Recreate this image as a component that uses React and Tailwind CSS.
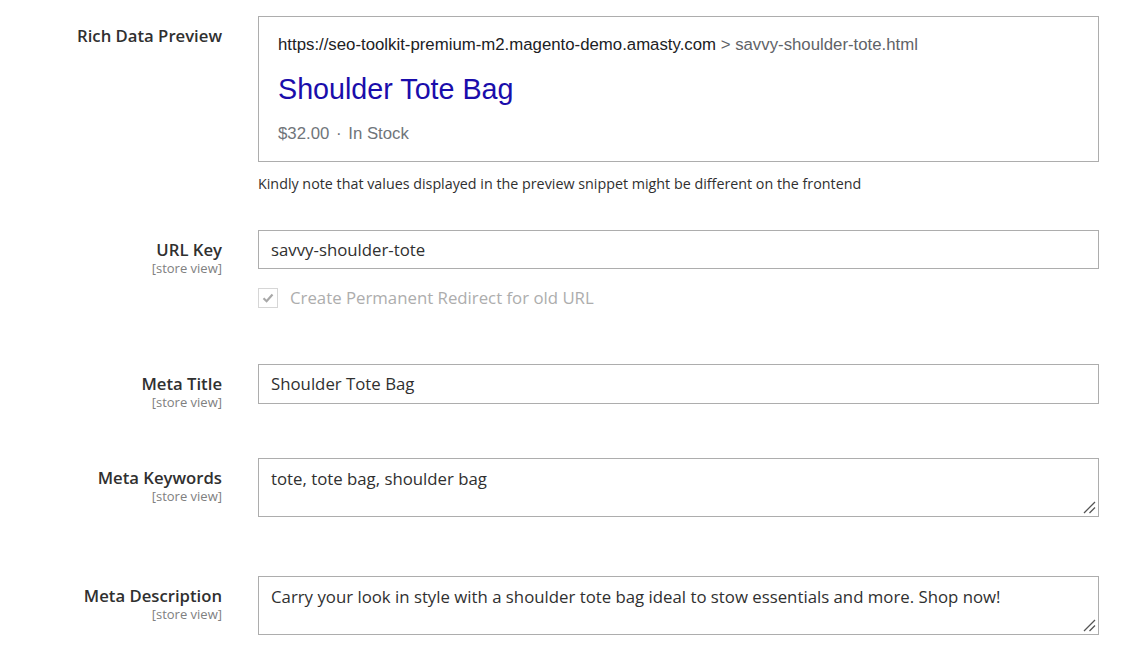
import React from "react";

const os = { fontFamily: '"Open Sans", "Liberation Sans", sans-serif' };

function Label({ title, scope }) {
  return (
    <div className="w-[222px] shrink-0 text-right pt-[9px]">
      <div className="text-[16.7px] leading-[22px] font-semibold text-[#303030]">{title}</div>
      {scope && <div className="text-[13px] leading-[14px] text-[#808080]">[store view]</div>}
    </div>
  );
}

function Grip() {
  return (
    <svg className="absolute right-[3px] bottom-[3px]" width="14" height="14" viewBox="0 0 14 14">
      <path d="M2 13 L13 2 M7.5 13 L13 7.5" stroke="#555" strokeWidth="1.3" fill="none" />
    </svg>
  );
}

function Area({ value }) {
  return (
    <div className="relative">
      <textarea
        readOnly
        defaultValue={value}
        className="block w-[841px] h-[59px] resize-none border border-[#adadad] px-[12px] pt-[9px] text-[16.8px] leading-[22px] text-[#303030] outline-none"
        style={os}
      />
      <Grip />
    </div>
  );
}

export default function App() {
  return (
    <div className="min-h-[650px] w-[1129px] bg-white" style={os}>
      {/* Rich Data Preview */}
      <div className="flex pt-[16px]">
        <Label title="Rich Data Preview" />
        <div className="ml-[36px] w-[841px]">
          <div className="h-[146px] border border-[#adadad] px-[19px] pt-[18px]" style={{ fontFamily: '"Liberation Sans", Arial, sans-serif' }}>
            <div className="text-[16.8px] leading-[20px] text-[#202124]">
              https://seo-toolkit-premium-m2.magento-demo.amasty.com <span className="text-[#5f6368]">&gt; savvy-shoulder-tote.html</span>
            </div>
            <div className="mt-[17px] text-[28.7px] leading-[34px] text-[#1a0dab]">Shoulder Tote Bag</div>
            <div className="mt-[18px] text-[16.8px] leading-[20px] text-[#70757a]">$32.00 <span className="mx-[2px]">·</span> In Stock</div>
          </div>
          <div className="mt-[13px] text-[14.3px] leading-[18px] text-[#303030]">
            Kindly note that values displayed in the preview snippet might be different on the frontend
          </div>
        </div>
      </div>

      {/* URL Key */}
      <div className="flex mt-[37px]">
        <Label title="URL Key" scope />
        <div className="ml-[36px] w-[841px]">
          <div className="h-[39px] border border-[#adadad] px-[12px] flex items-center text-[16.8px] text-[#303030]">savvy-shoulder-tote</div>
          <div className="mt-[19px] flex items-center">
            <div className="w-[20px] h-[20px] border border-[#d6d6d6] bg-white flex items-center justify-center">
              <svg width="14" height="14" viewBox="0 0 14 14">
                <path d="M2.5 7.2 L5.6 10.2 L11.5 3.6" fill="none" stroke="#a8a8a8" strokeWidth="2.2" />
              </svg>
            </div>
            <div className="ml-[12px] text-[16.8px] leading-[20px] text-[#adadad]">Create Permanent Redirect for old URL</div>
          </div>
        </div>
      </div>

      {/* Meta Title */}
      <div className="flex mt-[56px]">
        <Label title="Meta Title" scope />
        <div className="ml-[36px] w-[841px]">
          <div className="h-[40px] border border-[#adadad] px-[12px] flex items-center text-[16.8px] text-[#303030]">Shoulder Tote Bag</div>
        </div>
      </div>

      {/* Meta Keywords */}
      <div className="flex mt-[49px]">
        <Label title="Meta Keywords" scope />
        <div className="ml-[36px] w-[841px]">
          <Area value="tote, tote bag, shoulder bag" />
        </div>
      </div>

      {/* Meta Description */}
      <div className="flex mt-[59px]">
        <Label title="Meta Description" scope />
        <div className="ml-[36px] w-[841px]">
          <Area value="Carry your look in style with a shoulder tote bag ideal to stow essentials and more. Shop now!" />
        </div>
      </div>
    </div>
  );
}
